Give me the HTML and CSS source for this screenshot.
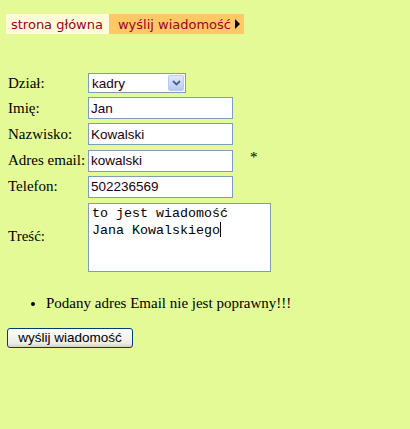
FILE: index.html
```html
<!DOCTYPE html>
<html lang="pl">
<head>
  <meta charset="UTF-8">
  <title>Wyślij wiadomość</title>
  <link rel="stylesheet" href="styles.css">
</head>
<body>
  <div class="menu">
    <a href="#" class="menu-item">strona główna</a>
    <a href="#" class="menu-item active">wyślij wiadomość <span class="arrow"></span></a>
  </div>

  <form class="contact-form">
    <table class="fields">
      <tr>
        <td class="label">Dział:</td>
        <td>
          <div class="select">
            <span class="select-value">kadry</span>
            <span class="select-btn">
              <svg width="9" height="6" viewBox="0 0 9 6"><path d="M1 1 L4.5 4.5 L8 1" fill="none" stroke="#4d6185" stroke-width="1.8"/></svg>
            </span>
          </div>
        </td>
      </tr>
      <tr>
        <td class="label">Imię:</td>
        <td><input type="text" value="Jan"></td>
      </tr>
      <tr>
        <td class="label">Nazwisko:</td>
        <td><input type="text" value="Kowalski"></td>
      </tr>
      <tr>
        <td class="label">Adres email:</td>
        <td><input type="text" value="kowalski"><span class="required">*</span></td>
      </tr>
      <tr>
        <td class="label">Telefon:</td>
        <td><input type="text" value="502236569"></td>
      </tr>
      <tr>
        <td class="label">Treść:</td>
        <td><div class="message">to jest wiadomość<br>Jana Kowalskiego<span class="caret"></span></div></td>
      </tr>
    </table>

    <ul class="errors">
      <li>Podany adres Email nie jest poprawny!!!</li>
    </ul>

    <button type="submit" class="send">wyślij wiadomość</button>
  </form>
</body>
</html>
```

FILE: styles.css
```css
body {
  background-color: #e4fa96;
  font-family: "Liberation Serif", "Times New Roman", serif;
  font-size: 15px;
  color: #000;
  margin: 0;
  padding: 14px 0 0 0;
}

/* menu */
.menu {
  display: flex;
  margin-left: 6px;
  height: 20px;
}

.menu-item {
  display: flex;
  align-items: center;
  height: 20px;
  font-family: "DejaVu Sans", Verdana, sans-serif;
  font-size: 13px;
  color: #a00022;
  text-decoration: none;
  background-color: #fffbd8;
  padding: 0 6px 0 5px;
}

.menu-item.active {
  background-color: #ffc867;
  padding: 0 4px 0 9px;
}

.arrow {
  display: inline-block;
  width: 0;
  height: 0;
  margin-left: 4px;
  border-top: 5px solid transparent;
  border-bottom: 5px solid transparent;
  border-left: 5px solid #000;
}

/* form */
.contact-form {
  margin-top: 36px;
}

.fields {
  margin-left: 5px;
  border-spacing: 2px;
}

.fields td {
  padding: 1px;
  vertical-align: middle;
}

.label {
  width: 76px;
  max-width: 76px;
  white-space: nowrap;
}

.fields input {
  width: 145px;
  height: 22px;
  box-sizing: border-box;
  border: 1px solid #7f9db9;
  padding: 0 2px;
  font-family: "Liberation Sans", Arial, sans-serif;
  font-size: 13.5px;
  color: #1a0012;
  background: #fff;
  vertical-align: middle;
}

.required {
  margin-left: 17px;
  font-size: 15px;
  vertical-align: 2px;
}

.select {
  display: flex;
  align-items: center;
  width: 98px;
  height: 20px;
  box-sizing: border-box;
  border: 1px solid #7f9db9;
  background: #fff;
  padding: 1px;
}

.select-value {
  flex: 1;
  padding-left: 2px;
  font-family: "Liberation Sans", Arial, sans-serif;
  font-size: 13.5px;
  color: #1a0012;
}

.select-btn {
  display: flex;
  align-items: center;
  justify-content: center;
  width: 16px;
  height: 16px;
  box-sizing: border-box;
  border: 1px solid #b9c9ef;
  border-radius: 2px;
  background: linear-gradient(#e2eafc, #b6c9f3);
}

.message {
  width: 183px;
  height: 69px;
  box-sizing: border-box;
  margin-top: 1px;
  border: 1px solid #7f9db9;
  background: #fff;
  padding: 2px 3px;
  font-family: "Liberation Mono", "Courier New", monospace;
  font-size: 13.33px;
  line-height: 16px;
  color: #000;
}

.caret {
  display: inline-block;
  width: 1px;
  height: 15px;
  background: #000;
  vertical-align: -3px;
}

.errors {
  margin: 20px 0 16px 0;
  padding-left: 46px;
}

.send {
  margin-left: 7px;
  width: 126px;
  height: 20px;
  padding: 0;
  font-family: "Liberation Sans", Arial, sans-serif;
  font-size: 13.5px;
  color: #000;
  border: 1px solid #003c74;
  border-radius: 3px;
  background: linear-gradient(#ffffff, #ecebe6 80%, #d6d0c5);
  cursor: pointer;
}
```
